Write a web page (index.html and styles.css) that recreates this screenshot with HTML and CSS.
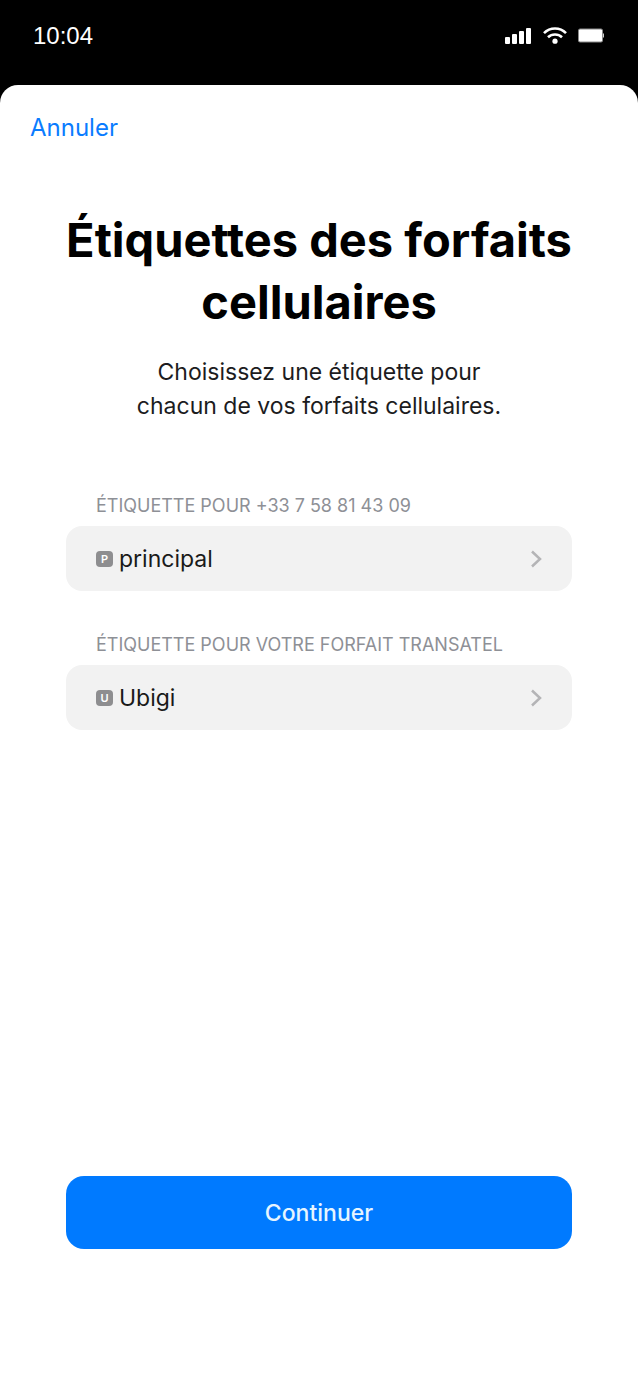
FILE: index.html
```html
<!DOCTYPE html>
<html lang="fr">
<head>
<meta charset="utf-8">
<meta name="viewport" content="width=device-width, initial-scale=1">
<title>Étiquettes des forfaits cellulaires</title>
<link rel="stylesheet" href="styles.css">
</head>
<body>
<header class="status">
  <time class="status-time">10:04</time>
  <div class="status-icons">
    <svg width="28" height="18" viewBox="0 0 28 18" fill="#fff" aria-label="Réseau"><rect x="0" y="10" width="5" height="7" rx="1"/><rect x="7" y="7" width="5" height="10" rx="1"/><rect x="14" y="4" width="5" height="13" rx="1"/><rect x="21" y="1" width="5" height="16" rx="1"/></svg>
    <svg width="24" height="18" viewBox="0 0 24 18" fill="none" stroke="#fff" stroke-width="2.6" aria-label="Wi-Fi"><path d="M1 6.1C7-.1 17-.1 23 6.1M5 10.3C9 6.5 15 6.5 19 10.3"/><circle cx="12" cy="14.2" r="2.6" fill="#fff" stroke="none"/></svg>
    <svg width="27" height="16" viewBox="0 0 27 16" aria-label="Batterie"><rect x="1.5" y="1" width="24" height="13" rx="1.5" fill="#fff" stroke="#8a8a8a"/><path d="M26.5 5.5v4" stroke="#ccc" stroke-width="1"/></svg>
  </div>
</header>
<main class="sheet">
  <nav class="bar"><button class="cancel" type="button">Annuler</button></nav>
  <div class="content">
    <h1 class="title">Étiquettes des forfaits cellulaires</h1>
    <p class="intro">Choisissez une étiquette pour<br>chacun de vos forfaits cellulaires.</p>
    <section class="group">
      <h2 class="label" id="label-main">ÉTIQUETTE POUR +33 7 58 81 43 09</h2>
      <button class="row" type="button" aria-describedby="label-main">
        <span class="badge">P</span><span class="name">principal</span>
        <svg class="chevron" width="12" height="18" viewBox="0 0 12 18"><path d="M2 1.5l8 7.5-8 7.5"/></svg>
      </button>
    </section>
    <section class="group">
      <h2 class="label" id="label-plan">ÉTIQUETTE POUR VOTRE FORFAIT TRANSATEL</h2>
      <button class="row" type="button" aria-describedby="label-plan">
        <span class="badge">U</span><span class="name">Ubigi</span>
        <svg class="chevron" width="12" height="18" viewBox="0 0 12 18"><path d="M2 1.5l8 7.5-8 7.5"/></svg>
      </button>
    </section>
    <button class="continue" type="button">Continuer</button>
  </div>
</main>
</body>
</html>
```

FILE: styles.css
```css
* { box-sizing: border-box; }
body {
  margin: 0;
  min-height: 100vh;
  display: flex;
  flex-direction: column;
  background: #000;
  color: #000;
  font-family: Inter, "Liberation Sans", sans-serif;
}
button { border: 0; padding: 0; background: none; font: inherit; color: inherit; cursor: pointer; }
svg { display: block; }
.status {
  display: flex;
  justify-content: space-between;
  padding: 20px 34px 33px 33px;
}
.status-time {
  color: #fff;
  font-family: "Liberation Sans", sans-serif;
  font-size: 24px;
  line-height: 32px;
}
.status-icons { display: flex; align-items: center; gap: 10px; height: 32px; }
.sheet {
  flex: 1;
  display: flex;
  flex-direction: column;
  background: #fff;
  border-radius: 18px 18px 0 0;
}
.bar { padding: 27px 30px 0; }
.cancel { display: block; color: #0a7cff; font-size: 24px; line-height: 32px; }
.content {
  flex: 1;
  display: flex;
  flex-direction: column;
  padding: 65px 66px 133px;
}
.title {
  margin: 0 -16px;
  text-align: center;
  font-size: 47px;
  line-height: 62px;
  font-weight: 700;
}
.intro {
  margin: 22px 0 71px;
  text-align: center;
  color: #1c1c1e;
  font-size: 23px;
  line-height: 34px;
}
.group { margin-bottom: 42px; }
.label {
  margin: 0;
  padding: 0 30px 8px;
  color: #8e9096;
  font-size: 18px;
  line-height: 24px;
  font-weight: 400;
}
.row {
  display: flex;
  align-items: center;
  width: 100%;
  height: 65px;
  padding: 0 30px;
  border-radius: 16px;
  background: #f2f2f2;
  text-align: left;
}
.badge {
  width: 17px;
  height: 16px;
  margin-right: 6px;
  border-radius: 4px;
  background: #8e8e90;
  color: #fff;
  font-size: 11px;
  line-height: 16px;
  font-weight: 600;
  text-align: center;
}
.name { flex: 1; color: #1a1a1a; font-size: 23px; line-height: 32px; }
.chevron { fill: none; stroke: #b4b4b6; stroke-width: 2.5; }
.continue {
  margin-top: auto;
  height: 73px;
  border-radius: 18px;
  background: #007aff;
  color: #e6f5ff;
  font-size: 23px;
  line-height: 32px;
  font-weight: 500;
}
```
